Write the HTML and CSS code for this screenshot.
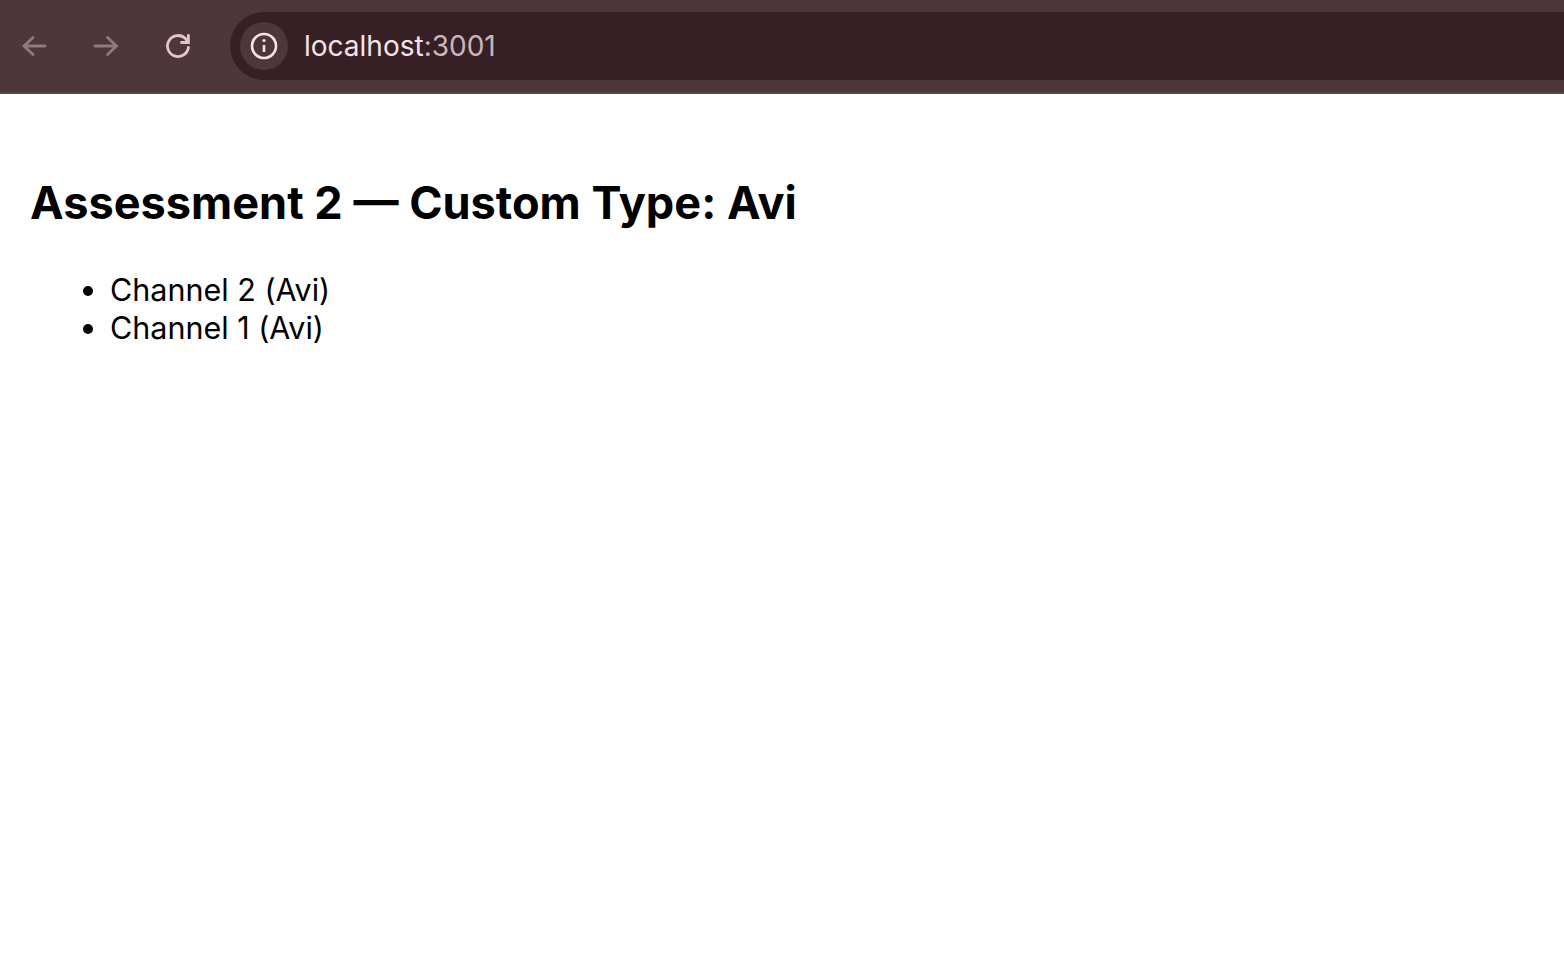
FILE: index.html
```html
<!DOCTYPE html>
<html lang="en">

<head>
    <meta charset="UTF-8">
    <meta name="viewport" content="width=device-width, initial-scale=1.0">
    <title>Assessment 2</title>
    <link rel="stylesheet" href="styles.css">
</head>

<body>
    <!-- Browser toolbar -->
    <header class="toolbar">
        <div class="nav-buttons">
            <svg class="nav-icon dim" viewBox="0 0 28 28"><path d="M24 14H3M12 5.500l-9 8.500 9 8.500"/></svg>
            <svg class="nav-icon dim" viewBox="0 0 28 28"><path d="M3 14h21.500M15.500 5.500l9 8.500-9 8.500"/></svg>
            <svg class="nav-icon" viewBox="0 0 28 28"><path d="M25.400 15.500a10.500 10.500 0 1 1-3-8.920L25.400 10M25.400 3.500V10.500H18.500"/></svg>
        </div>
        <div class="address-bar">
            <span class="site-info">
                <svg class="info-icon" viewBox="0 0 28 28">
                    <circle cx="14" cy="14" r="12"/>
                    <path d="M14 13v7"/>
                    <circle class="info-dot" cx="14" cy="8.500" r="1.600"/>
                </svg>
            </span>
            <span class="url">localhost<span class="url-port">:3001</span></span>
        </div>
    </header>

    <main class="content">
        <h1>Assessment 2 — Custom Type: Avi</h1>
        <ul>
            <li>Channel 2 (Avi)</li>
            <li>Channel 1 (Avi)</li>
        </ul>
    </main>
</body>

</html>
```
FILE: styles.css
```css
body {
    background-color: #fff;
    color: #000;
    font-family: Inter, "Liberation Sans", sans-serif;
    margin: 0;
    padding: 0;
}

.toolbar {
    background-color: #4e373a;
    border-bottom: 2px solid #57494b;
    box-sizing: border-box;
    display: flex;
    height: 94px;
    padding: 12px 0;
}

.nav-buttons {
    align-items: center;
    box-sizing: border-box;
    display: flex;
    gap: 43px;
    padding-left: 21px;
    width: 230px;
}

.nav-icon {
    fill: none;
    height: 28px;
    stroke: #e6c4ca;
    stroke-linecap: round;
    stroke-width: 2.800;
    width: 28px;
}

.nav-icon.dim {
    stroke: #8f7a7d;
}

.address-bar {
    align-items: center;
    background-color: #372025;
    border-radius: 34px 0 0 34px;
    display: flex;
    flex: 1;
    height: 68px;
    padding-left: 10px;
}

.site-info {
    align-items: center;
    background-color: #4e373a;
    border-radius: 50%;
    display: flex;
    height: 48px;
    justify-content: center;
    width: 48px;
}

.info-icon {
    fill: none;
    height: 28px;
    stroke: #f3e3e5;
    stroke-width: 2.600;
    width: 28px;
}

.info-dot {
    fill: #f3e3e5;
    stroke: none;
}

.url {
    color: #f3e3e5;
    font-size: 28px;
    margin-left: 16px;
}

.url-port {
    color: #c9b7ba;
}

.content {
    padding: 0 30px;
}

h1 {
    font-size: 45.100px;
    font-weight: 700;
    line-height: 54px;
    margin: 82px 0 0;
}

ul {
    font-size: 30.500px;
    line-height: 38px;
    margin: 41px 0 0;
    padding-left: 80px;
}
```
